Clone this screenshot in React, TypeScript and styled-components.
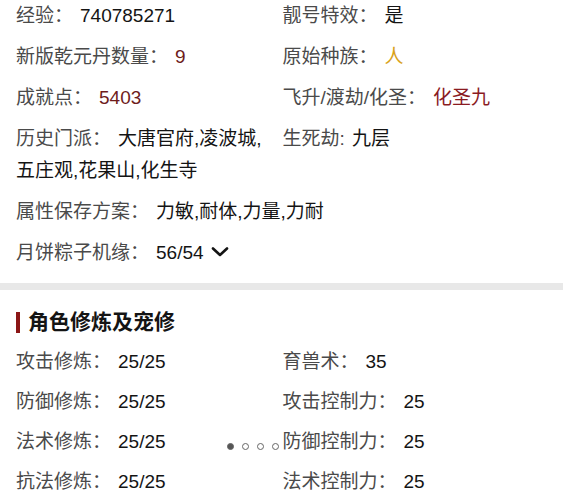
import styled, { createGlobalStyle } from "styled-components";

const Global = createGlobalStyle`
  body {
    margin: 0;
    background: #fff;
    font-family: "Liberation Sans", "Noto Sans CJK SC", sans-serif;
  }
`;

const Page = styled.div`
  width: 563px;
  overflow: hidden;
`;

const Grid = styled.div<{ $gap?: number }>`
  display: grid;
  grid-template-columns: 1fr 1fr;
  column-gap: 2px;
  row-gap: ${(p) => p.$gap ?? 9}px;
  padding: 0 16px;
  position: relative;
`;

const Cell = styled.div<{ $wide?: boolean }>`
  grid-column: ${(p) => (p.$wide ? "1 / -1" : "auto")};
  padding-right: 12px;
  font-size: 19px;
  line-height: 32px;
  color: #4a4a4a;
`;

const Value = styled.span<{ $color?: string; $gap?: number }>`
  margin-left: ${(p) => p.$gap ?? 7}px;
  color: ${(p) => p.$color ?? "#141414"};
`;

const Divider = styled.div`
  height: 7px;
  background: #e8e8e8;
  margin: 14px 0 16px;
`;

const Title = styled.h2`
  margin: 0 0 8px;
  padding: 0 16px;
  display: flex;
  align-items: center;
  gap: 8px;
  font-size: 21px;
  line-height: 32px;
  font-weight: 700;
  color: #141414;
  &::before {
    content: "";
    width: 4px;
    height: 21px;
    background: #8b1616;
  }
`;

const Dots = styled.div`
  position: absolute;
  left: 227px;
  top: 97px;
  display: flex;
  gap: 8px;
`;

const Dot = styled.span<{ $on?: boolean }>`
  width: 7px;
  height: 7px;
  border-radius: 50%;
  box-sizing: border-box;
  background: ${(p) => (p.$on ? "#555" : "#fff")};
  border: 1px solid #666;
`;

const Chevron = () => (
  <svg width="18" height="12" viewBox="0 0 18 12" style={{ marginLeft: 7, verticalAlign: "1px" }}>
    <polyline points="2,2.5 9,9 16,2.5" fill="none" stroke="#141414" strokeWidth="2.6" strokeLinecap="round" strokeLinejoin="round" />
  </svg>
);

export default function App() {
  return (
    <Page>
      <Global />
      <Grid>
        <Cell>经验：<Value>740785271</Value></Cell>
        <Cell>靓号特效：<Value>是</Value></Cell>
        <Cell>新版乾元丹数量：<Value $color="#6e1c1c">9</Value></Cell>
        <Cell>原始种族：<Value $color="#d9a21c">人</Value></Cell>
        <Cell>成就点：<Value $color="#6e1c1c">5403</Value></Cell>
        <Cell>飞升/渡劫/化圣：<Value $color="#8a1a1f">化圣九</Value></Cell>
        <Cell>历史门派：<Value>大唐官府,凌波城,五庄观,花果山,化生寺</Value></Cell>
        <Cell>生死劫: <Value $gap={2}>九层</Value></Cell>
        <Cell $wide>属性保存方案：<Value>力敏,耐体,力量,力耐</Value></Cell>
        <Cell $wide>月饼粽子机缘：<Value>56/54<Chevron /></Value></Cell>
      </Grid>
      <Divider />
      <Title>角色修炼及宠修</Title>
      <Grid $gap={8}>
        <Cell>攻击修炼：<Value>25/25</Value></Cell>
        <Cell>育兽术：<Value>35</Value></Cell>
        <Cell>防御修炼：<Value>25/25</Value></Cell>
        <Cell>攻击控制力：<Value>25</Value></Cell>
        <Cell>法术修炼：<Value>25/25</Value></Cell>
        <Cell>防御控制力：<Value>25</Value></Cell>
        <Cell>抗法修炼：<Value>25/25</Value></Cell>
        <Cell>法术控制力：<Value>25</Value></Cell>
        <Dots>
          <Dot $on />
          <Dot />
          <Dot />
          <Dot />
        </Dots>
      </Grid>
    </Page>
  );
}
